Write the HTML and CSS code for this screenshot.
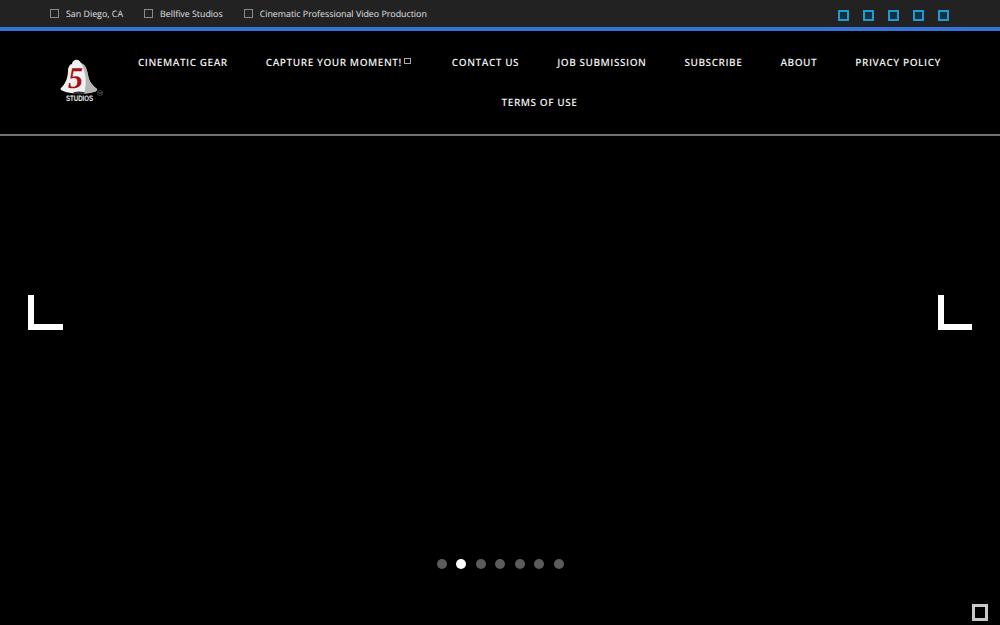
FILE: index.html
```html
<!DOCTYPE html>
<html lang="en">
<head>
    <meta charset="UTF-8">
    <meta name="viewport" content="width=device-width, initial-scale=1.0">
    <title>Bellfive Studios</title>
    <link rel="stylesheet" href="styles.css">
</head>
<body>
    <div class="topbar">
        <ul class="info">
            <li><span class="tofu"></span>San Diego, CA</li>
            <li><span class="tofu"></span>Bellfive Studios</li>
            <li><span class="tofu"></span>Cinematic Professional Video Production</li>
        </ul>
        <div class="social">
            <a href="#"></a>
            <a href="#"></a>
            <a href="#"></a>
            <a href="#"></a>
            <a href="#"></a>
        </div>
    </div>
    <header class="header">
        <a class="logo" href="#">
            <svg width="44" height="46" viewBox="0 0 44 46">
                <path d="M15 2C18 1 20 3 21 5C26 7 27 12 28 17C29 24 33 28 37 31C38 33 34 34 30 35C22 36 10 36 3 33C0 32 0 30 2 29C6 25 8 18 8 13C8 9 10 6 12 6C12 4 13 3 15 2z" fill="#f1f1f1"/>
                <path d="M21 5C26 7 27 12 28 17C29 24 33 28 37 31C38 33 34 34 30 35L24 35.500C27 26 26 14 21 5z" fill="#b5b5b5"/>
                <ellipse cx="19" cy="35" rx="6" ry="1.500" fill="#333"/>
                <text class="logo-five" x="8" y="29.500">5</text>
                <text class="logo-name" x="6" y="43" textLength="27" lengthAdjust="spacingAndGlyphs">STUDIOS</text>
                <circle cx="40" cy="35" r="2.500" fill="none" stroke="#777" stroke-width="0.500"/>
                <text class="logo-tm" x="38.200" y="36">TM</text>
            </svg>
        </a>
        <nav class="nav">
            <a href="#">CINEMATIC GEAR</a>
            <a href="#">CAPTURE YOUR MOMENT!<span class="caret"></span></a>
            <a href="#">CONTACT US</a>
            <a href="#">JOB SUBMISSION</a>
            <a href="#">SUBSCRIBE</a>
            <a href="#">ABOUT</a>
            <a href="#">PRIVACY POLICY</a>
            <a href="#">TERMS OF USE</a>
        </nav>
    </header>
    <main class="hero">
        <a class="arrow arrow-prev" href="#"></a>
        <a class="arrow arrow-next" href="#"></a>
        <div class="dots">
            <span></span>
            <span class="active"></span>
            <span></span>
            <span></span>
            <span></span>
            <span></span>
            <span></span>
        </div>
        <a class="to-top" href="#"></a>
    </main>
</body>
</html>
```

FILE: styles.css
```css
* {
    box-sizing: border-box;
}
html, body {
    height: 100%;
}
body {
    margin: 0;
    display: flex;
    flex-direction: column;
    overflow: hidden;
    background: #000;
    font-family: 'Open Sans', 'Liberation Sans', Arial, sans-serif;
    text-rendering: geometricPrecision;
}
a {
    color: inherit;
    text-decoration: none;
}
.topbar {
    display: flex;
    justify-content: space-between;
    align-items: center;
    height: 31px;
    padding: 0 51px 0 50px;
    background: #222;
    border-bottom: 4px solid #3474d8;
}
.info {
    display: flex;
    gap: 21px;
    margin: 0;
    padding: 0;
    list-style: none;
    font-size: 8.850px;
    color: #e2e2e2;
}
.info li {
    display: flex;
    align-items: center;
    gap: 7px;
}
.tofu {
    width: 9px;
    height: 9px;
    border: 1px solid #8a8a8a;
}
.social {
    display: flex;
    gap: 14px;
    margin-top: 3px;
}
.social a {
    width: 11px;
    height: 11px;
    border: 2px solid #1f9bd1;
    background: #12303f;
}
.header {
    display: flex;
    align-items: flex-start;
    gap: 5px;
    padding: 11px 30px 12px 60px;
    border-bottom: 2px solid #707070;
}
.logo {
    flex: none;
    width: 44px;
    height: 46px;
    margin-top: 16px;
}
.logo svg {
    display: block;
}
.logo-five {
    font-family: 'Liberation Serif', serif;
    font-size: 30px;
    font-style: italic;
    font-weight: bold;
    fill: #a80f16;
}
.logo-name {
    font-family: 'Liberation Sans', Arial, sans-serif;
    font-size: 8px;
    font-weight: bold;
    fill: #eee;
}
.logo-tm {
    font-family: 'Liberation Sans', Arial, sans-serif;
    font-size: 2.500px;
    fill: #aaa;
}
.nav {
    flex: 1;
    display: flex;
    flex-wrap: wrap;
    justify-content: center;
    line-height: 40px;
    font-size: 10px;
    font-weight: 600;
    letter-spacing: 0.550px;
    color: #eee;
}
.nav a {
    padding: 0 19px;
}
.caret {
    display: inline-block;
    width: 7px;
    height: 6px;
    margin: 0 3px 0 2px;
    border: 1px solid #aaa;
    vertical-align: 2px;
}
.hero {
    position: relative;
    flex: 1;
    background: #000;
}
.arrow {
    position: absolute;
    top: 159px;
    width: 35px;
    height: 35px;
    border-left: 6px solid #fff;
    border-bottom: 6px solid #fff;
}
.arrow-prev {
    left: 28px;
}
.arrow-next {
    right: 28px;
    width: 34px;
}
.dots {
    position: absolute;
    left: 436.500px;
    top: 423px;
    display: flex;
    gap: 9.500px;
}
.dots span {
    width: 10px;
    height: 10px;
    border-radius: 50%;
    background: #5c5c5c;
}
.dots .active {
    background: #fff;
}
.to-top {
    position: absolute;
    right: 12px;
    bottom: 4px;
    width: 16px;
    height: 17px;
    border: 3px solid #c8c8c8;
}
```
